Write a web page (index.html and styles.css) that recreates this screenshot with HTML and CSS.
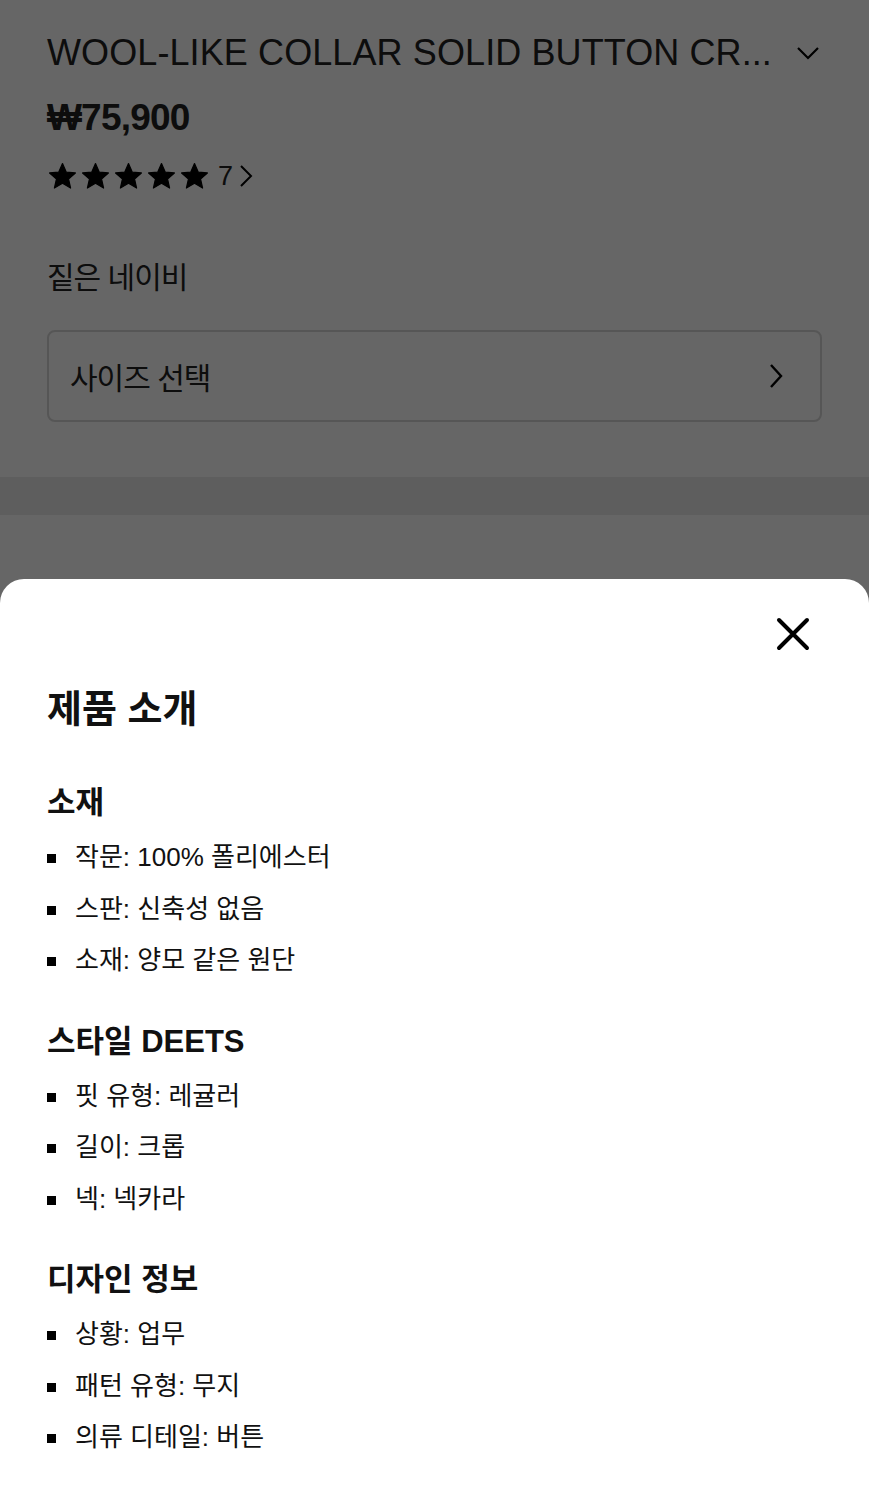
FILE: index.html
```html
<!DOCTYPE html>
<html lang="ko">
<head>
    <meta charset="UTF-8">
    <meta name="viewport" content="width=device-width, initial-scale=1.0">
    <title>제품 소개</title>
    <link rel="stylesheet" href="styles.css">
</head>
<body>
    <div class="page">
        <div class="product">
            <div class="title-row">
                <h1 class="title">WOOL-LIKE COLLAR SOLID BUTTON CR...</h1>
                <svg class="title-chevron" width="24" height="14" viewBox="0 0 24 14">
                    <path d="M2 2 L12 12 L22 2" fill="none" stroke="#000" stroke-width="2.2"/>
                </svg>
            </div>
            <div class="price">₩75,900</div>
            <div class="rating">
                <div class="stars">
                    <svg width="27" height="27" viewBox="1 1 22 22"><path d="M12 1.5l3.1 7 7.4.6-5.6 4.9 1.7 7.4L12 17.5l-6.6 3.9 1.7-7.4L1.5 9.1l7.4-.6z" stroke="#000" stroke-width="1" stroke-linejoin="round"/></svg>
                    <svg width="27" height="27" viewBox="1 1 22 22"><path d="M12 1.5l3.1 7 7.4.6-5.6 4.9 1.7 7.4L12 17.5l-6.6 3.9 1.7-7.4L1.5 9.1l7.4-.6z" stroke="#000" stroke-width="1" stroke-linejoin="round"/></svg>
                    <svg width="27" height="27" viewBox="1 1 22 22"><path d="M12 1.5l3.1 7 7.4.6-5.6 4.9 1.7 7.4L12 17.5l-6.6 3.9 1.7-7.4L1.5 9.1l7.4-.6z" stroke="#000" stroke-width="1" stroke-linejoin="round"/></svg>
                    <svg width="27" height="27" viewBox="1 1 22 22"><path d="M12 1.5l3.1 7 7.4.6-5.6 4.9 1.7 7.4L12 17.5l-6.6 3.9 1.7-7.4L1.5 9.1l7.4-.6z" stroke="#000" stroke-width="1" stroke-linejoin="round"/></svg>
                    <svg width="27" height="27" viewBox="1 1 22 22"><path d="M12 1.5l3.1 7 7.4.6-5.6 4.9 1.7 7.4L12 17.5l-6.6 3.9 1.7-7.4L1.5 9.1l7.4-.6z" stroke="#000" stroke-width="1" stroke-linejoin="round"/></svg>
                </div>
                <span class="count">7</span>
                <svg width="14" height="24" viewBox="0 0 14 24">
                    <path d="M2 2 L12 12 L2 22" fill="none" stroke="#000" stroke-width="2"/>
                </svg>
            </div>
            <div class="color-name">짙은 네이비</div>
            <div class="size-select">
                <span>사이즈 선택</span>
                <svg width="16" height="26" viewBox="0 0 16 26">
                    <path d="M3 2 L13 13 L3 24" fill="none" stroke="#000" stroke-width="2.4"/>
                </svg>
            </div>
        </div>
        <div class="divider"></div>
    </div>

    <div class="overlay"></div>

    <div class="sheet">
        <div class="sheet-head">
            <svg class="close" width="34" height="34" viewBox="0 0 34 34">
                <path d="M3 3 L31 31 M31 3 L3 31" stroke="#000" stroke-width="4" stroke-linecap="round"/>
            </svg>
        </div>
        <h2 class="sheet-title">제품 소개</h2>

        <div class="section">
            <h3>소재</h3>
            <ul>
                <li>작문: 100% 폴리에스터</li>
                <li>스판: 신축성 없음</li>
                <li>소재: 양모 같은 원단</li>
            </ul>
        </div>

        <div class="section">
            <h3>스타일 DEETS</h3>
            <ul>
                <li>핏 유형: 레귤러</li>
                <li>길이: 크롭</li>
                <li>넥: 넥카라</li>
            </ul>
        </div>

        <div class="section">
            <h3>디자인 정보</h3>
            <ul>
                <li>상황: 업무</li>
                <li>패턴 유형: 무지</li>
                <li>의류 디테일: 버튼</li>
            </ul>
        </div>
    </div>
</body>
</html>
```

FILE: styles.css
```css
html, body {
    height: 100%;
}

body {
    margin: 0;
    background-color: #fff;
    color: #222;
    font-family: 'Liberation Sans', 'Noto Sans CJK KR', sans-serif;
    position: relative;
    overflow: hidden;
}

.product {
    padding: 28px 47px 0;
}

.title-row {
    display: flex;
    align-items: center;
    justify-content: space-between;
    height: 50px;
}

.title {
    margin: 0;
    font-size: 36px;
    font-weight: normal;
    letter-spacing: 0.1px;
    white-space: nowrap;
}

.title-chevron {
    margin-right: 2px;
}

.price {
    margin-top: 19px;
    font-size: 37px;
    font-weight: bold;
    letter-spacing: -0.8px;
}

.rating {
    display: flex;
    align-items: center;
    margin-top: 20px;
    height: 34px;
}

.stars {
    display: flex;
    gap: 6px;
    margin-left: 2px;
}

.count {
    font-size: 27px;
    margin: 0 6px 0 10px;
}

.color-name {
    margin-top: 60px;
    font-size: 30px;
    letter-spacing: -1px;
}

.size-select {
    margin-top: 33px;
    height: 88px;
    border: 2px solid #d6d6d6;
    border-radius: 8px;
    display: flex;
    align-items: center;
    justify-content: space-between;
    padding: 0 36px 0 21px;
    font-size: 30px;
    letter-spacing: -1px;
}

.divider {
    margin-top: 55px;
    height: 38px;
    background-color: #ececec;
}

.overlay {
    position: absolute;
    inset: 0;
    background-color: rgba(0, 0, 0, 0.6);
}

.sheet {
    position: absolute;
    top: 579px;
    left: 0;
    right: 0;
    bottom: 0;
    background-color: #fff;
    border-radius: 24px 24px 0 0;
    padding: 0 47px;
    color: #111;
}

.sheet-head {
    display: flex;
    justify-content: flex-end;
    padding-top: 38px;
}

.close {
    margin-right: 12px;
}

.sheet-title {
    margin: 27px 0 0;
    font-size: 38px;
    font-weight: bold;
}

.section {
    margin-top: 50px;
}

.section + .section {
    margin-top: 35px;
}

.section h3 {
    margin: 0;
    font-size: 31px;
    font-weight: bold;
    line-height: 40px;
}

.section ul {
    list-style: none;
    margin: 9px 0 0;
    padding: 0;
}

.section li {
    position: relative;
    padding-left: 28px;
    font-size: 26px;
    line-height: 51.5px;
}

.section li::before {
    content: '';
    position: absolute;
    left: 0;
    top: 22px;
    width: 9px;
    height: 9px;
    background-color: #000;
}
```
